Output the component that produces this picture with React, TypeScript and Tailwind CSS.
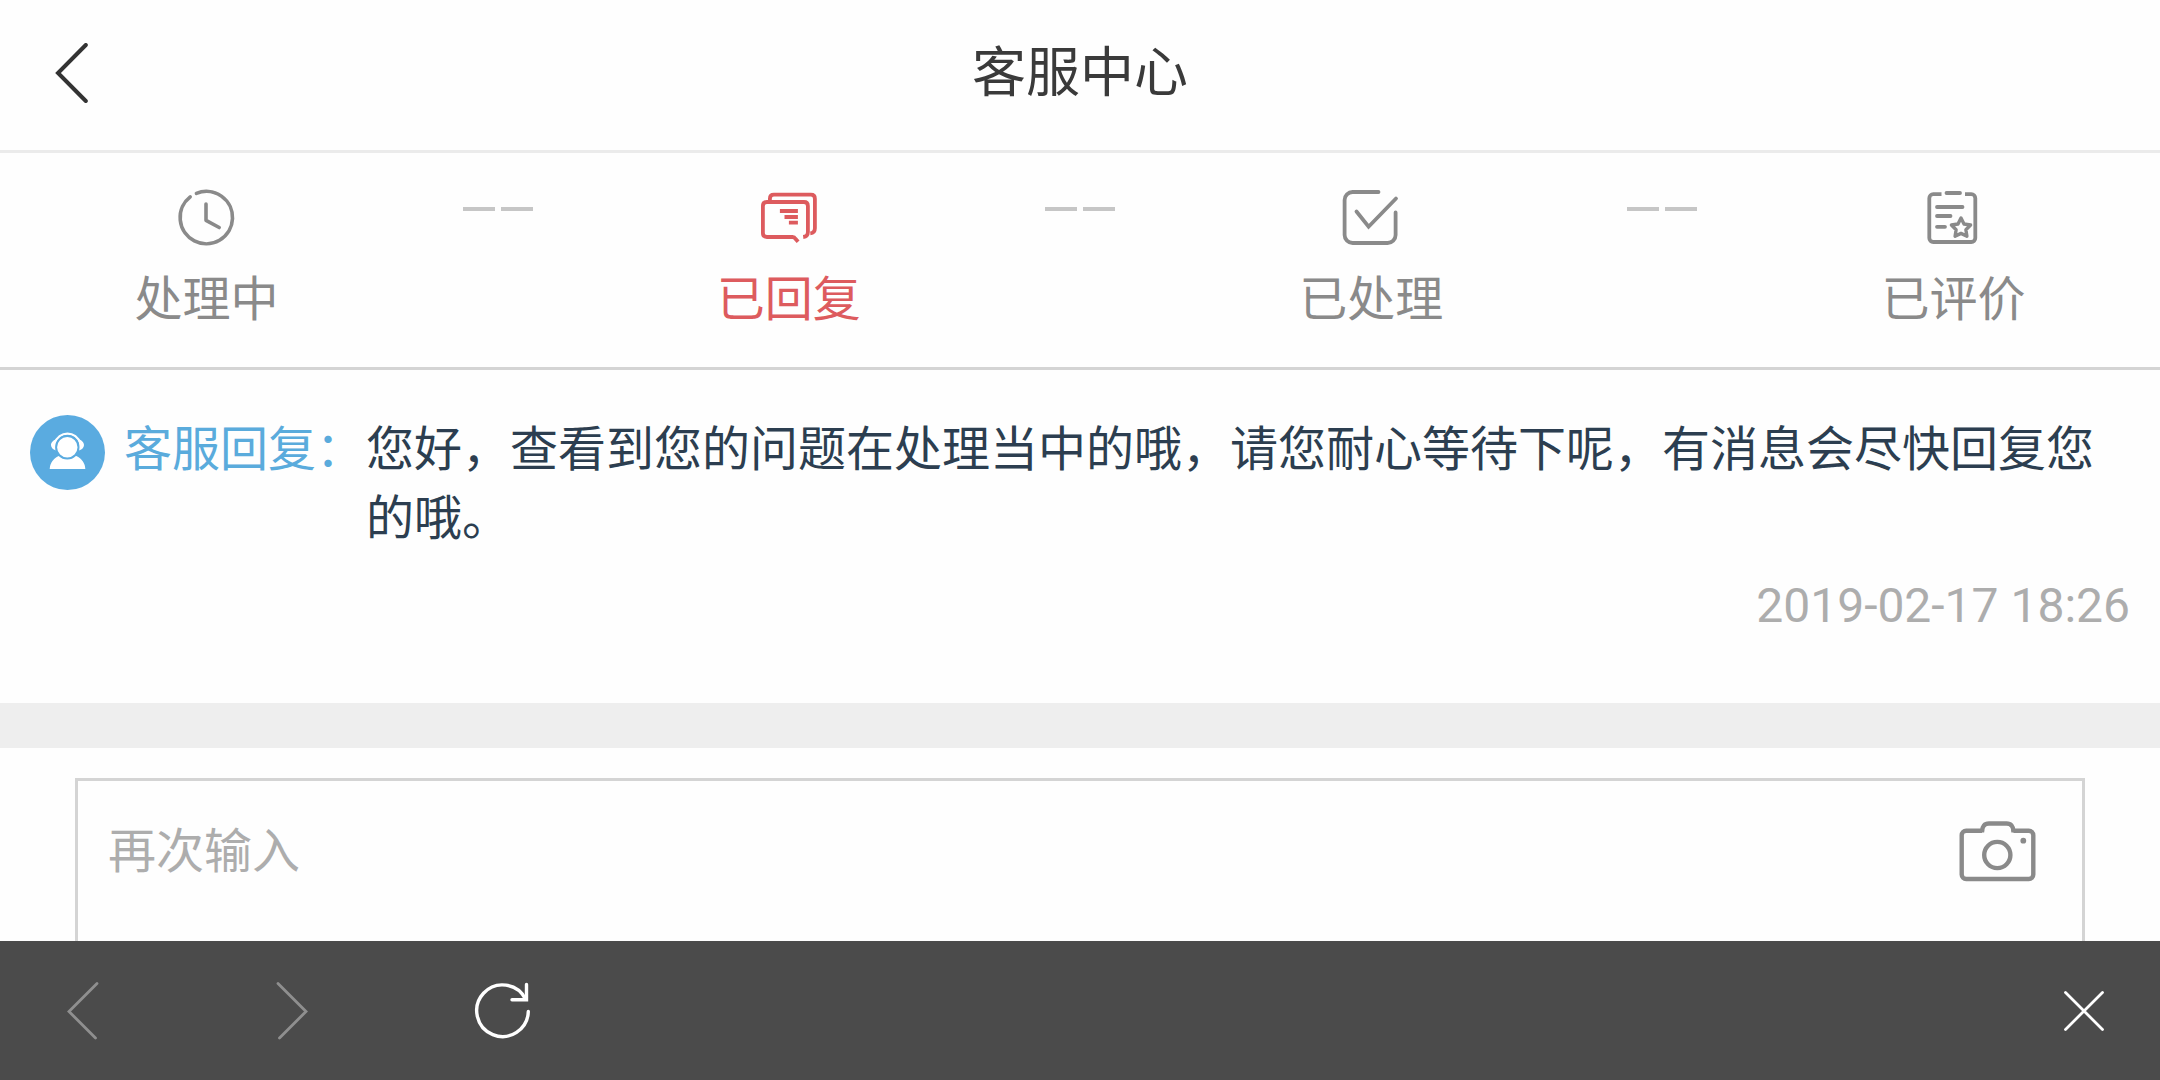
import React, { useState } from 'react';

interface IconProps {
  className?: string;
}

const ClockIcon: React.FC<IconProps> = ({ className = '' }) => (
  <svg viewBox="0 0 60 60" className={className} fill="none" stroke="currentColor" strokeWidth="3.6" strokeLinecap="round" strokeLinejoin="round" aria-hidden="true">
    <path d="M19.4 6.3A26.2 26.2 0 1 1 13.2 9.9" />
    <path d="M29 17v16.3l13.2 7.2" />
  </svg>
);

const ChatIcon: React.FC<IconProps> = ({ className = '' }) => (
  <svg viewBox="0 0 60 60" className={className} fill="none" stroke="currentColor" strokeWidth="3.8" aria-hidden="true">
    <path d="M44.2 50q4.700-.6 4.700-5V19q0-4-4-4h-37q-4 0-4 4v27q0 4 4 4h25.600q2 0 3 1.800l2.600 2.900" />
    <path d="M10.900 14v-2.300q0-4 4-4h37q4 0 4 4v29.500q0 4.700-4.600 5.100" />
    <path d="M20.900 24h18M25.500 30h13.400M29.900 35.700h9" />
  </svg>
);

const CheckIcon: React.FC<IconProps> = ({ className = '' }) => (
  <svg viewBox="0 0 60 60" className={className} fill="none" stroke="currentColor" strokeWidth="3.8" strokeLinecap="round" aria-hidden="true">
    <path d="M37.5 5H11.600a8 8 0 0 0-8 8v35a8 8 0 0 0 8 8h35a8 8 0 0 0 8-8V25.500" />
    <path d="M15.5 24.500l12.100 15.200L55 11.500" />
  </svg>
);

const ReviewIcon: React.FC<IconProps> = ({ className = '' }) => (
  <svg viewBox="0 0 60 60" className={className} fill="none" stroke="currentColor" strokeWidth="3.8" strokeLinejoin="round" aria-hidden="true">
    <path d="M18.500 7.200h-8.200a4 4 0 0 0-4 4V51a4 4 0 0 0 4 4h38a4 4 0 0 0 4-4V11.200a4 4 0 0 0-4-4H42" />
    <path d="M23.500 6h13.500M14 20h25.500M14 29h13.500M14 39.800h8" strokeLinecap="round" />
    <path d="M38 31l3 6 6.600 1-4.700 4.700 1 6.600-5.900-2.900-5.900 2.900 1-6.600-4.700-4.700 6.600-1z" strokeWidth="3.4" />
  </svg>
);

const AgentIcon: React.FC<IconProps> = ({ className = '' }) => (
  <svg viewBox="0 0 75 75" className={className} fill="none" aria-hidden="true">
    <circle cx="37.5" cy="37.5" r="37.5" fill="#5aabe0" />
    <path d="M25 28a13 13 0 0 1 25 0" stroke="#fff" strokeWidth="2.2" />
    <path d="M26 24.500c-3 .5-5 3.500-5 5.500s1.500 4.500 5 5.500zM49 24.500c3 .5 5 3.500 5 5.500s-1.500 4.500-5 5.500z" fill="#fff" />
    <path d="M19.700 54c.3-6 3.500-10.500 9-13h17.600c5.500 2.500 8.700 7 9 13z" fill="#fff" />
    <circle cx="37.300" cy="32.300" r="11.200" fill="#fff" stroke="#5aabe0" strokeWidth="2" />
  </svg>
);

const CameraIcon: React.FC<IconProps> = ({ className = '' }) => (
  <svg viewBox="0 0 80 66" className={className} fill="none" stroke="currentColor" strokeWidth="4.4" aria-hidden="true">
    <path d="M24 13.500V11.700H8.200a4.500 4.500 0 0 0-4.500 4.500v39.300a4.500 4.500 0 0 0 4.500 4.500h62.600a4.500 4.500 0 0 0 4.500-4.500V16.200a4.500 4.500 0 0 0-4.500-4.500H55.500v1.800" />
    <path d="M24 12.500c0-5 2.500-8 7-8h17.500c4.500 0 7 3 7 8" />
    <circle cx="39.3" cy="36" r="13.1" />
    <circle cx="65.3" cy="21.7" r="2.9" fill="currentColor" stroke="none" />
  </svg>
);

const BackIcon: React.FC<IconProps> = ({ className = '' }) => (
  <svg viewBox="0 0 60 60" className={className} fill="none" stroke="currentColor" strokeWidth="4" strokeLinecap="round" aria-hidden="true">
    <path d="M43.800 2L16 30l27.800 28" />
  </svg>
);

const ChevronLeftIcon: React.FC<IconProps> = ({ className = '' }) => (
  <svg viewBox="0 0 60 60" className={className} fill="none" stroke="currentColor" strokeWidth="2.8" strokeLinecap="round" aria-hidden="true">
    <path d="M45 2.500L17 30.500l26.500 26.500" />
  </svg>
);

const ChevronRightIcon: React.FC<IconProps> = ({ className = '' }) => (
  <svg viewBox="0 0 60 60" className={className} fill="none" stroke="currentColor" strokeWidth="2.8" strokeLinecap="round" aria-hidden="true">
    <path d="M16 2.500l28 28L17.500 57" />
  </svg>
);

const ReloadIcon: React.FC<IconProps> = ({ className = '' }) => (
  <svg viewBox="0 0 60 60" className={className} fill="none" stroke="currentColor" strokeWidth="3.4" strokeLinecap="round" aria-hidden="true">
    <path d="M56.300 30.500A25.800 25.800 0 1 1 53.500 18" />
    <path d="M54.500 3.500v15.200H40" />
  </svg>
);

const CloseIcon: React.FC<IconProps> = ({ className = '' }) => (
  <svg viewBox="0 0 60 60" className={className} fill="none" stroke="currentColor" strokeWidth="2.8" strokeLinecap="round" aria-hidden="true">
    <path d="M11.500 11.500l37 37M48.500 11.500l-37 37" />
  </svg>
);

const steps = [
  { label: '处理中', Icon: ClockIcon },
  { label: '已回复', Icon: ChatIcon },
  { label: '已处理', Icon: CheckIcon },
  { label: '已评价', Icon: ReviewIcon },
];

const StepBar: React.FC<{ current: number }> = ({ current }) => (
  <ol className="flex border-b-3 border-[#d4d4d4] px-[61px] pt-[34px] pb-[33px]">
    {steps.map(({ label, Icon }, index) => (
      <React.Fragment key={label}>
        {index > 0 && (
          <li className="flex flex-1 justify-center gap-1.5 pt-5" aria-hidden="true">
            <span className="h-1 w-8 bg-[#c6c6c6]" />
            <span className="h-1 w-8 bg-[#c6c6c6]" />
          </li>
        )}
        <li
          className={`flex flex-1 flex-col items-center gap-[18px] whitespace-nowrap ${
            index === current ? 'text-[#dd5b5e]' : 'text-[#8a8a8a]'
          }`}
          aria-current={index === current ? 'step' : undefined}
        >
          <Icon className="size-[60px]" />
          <span>{label}</span>
        </li>
      </React.Fragment>
    ))}
  </ol>
);

const Toolbar: React.FC = () => (
  <nav className="flex shrink-0 items-center gap-[150px] bg-[#4b4b4b] pt-10 pr-[46px] pb-[39px] pl-[52px] text-white">
    <button type="button" aria-label="后退" disabled className="text-[#8f8f8f]">
      <ChevronLeftIcon className="size-[60px]" />
    </button>
    <button type="button" aria-label="前进" disabled className="text-[#8f8f8f]">
      <ChevronRightIcon className="size-[60px]" />
    </button>
    <button type="button" aria-label="刷新">
      <ReloadIcon className="size-[60px]" />
    </button>
    <button type="button" aria-label="关闭" className="ml-auto">
      <CloseIcon className="size-[60px]" />
    </button>
  </nav>
);

export default function App(): React.JSX.Element {
  const [message, setMessage] = useState('');

  return (
    <div className="flex h-screen flex-col bg-[#fefefe] font-['Roboto','Noto_Sans_CJK_SC',sans-serif] text-[48px] leading-[69px]">
      <header className="grid h-[153px] shrink-0 grid-cols-[1fr_auto_1fr] items-center border-b-3 border-[#ebebeb] px-[42px] pb-1">
        <button type="button" aria-label="返回" className="justify-self-start text-[#333333]">
          <BackIcon className="size-[60px]" />
        </button>
        <h1 className="text-[54px] text-[#3a3a3a]">客服中心</h1>
      </header>

      <main className="min-h-0 flex-1 overflow-y-auto [scrollbar-width:none]">
        <StepBar current={1} />

        {/* Latest reply */}
        <section className="px-[30px] pt-[45px] pb-[63px]">
          <div className="flex items-start">
            <AgentIcon className="mr-[19px] size-[75px] shrink-0" />
            <span className="shrink-0 text-[#5aabdc]">客服回复：</span>
            <p className="ml-0.5 text-[#2c3e50]">
              您好，查看到您的问题在处理当中的哦，请您耐心等待下呢，有消息会尽快回复您的哦。
            </p>
          </div>
          <time dateTime="2019-02-17T18:26" className="mt-[18px] block text-right text-[#adadad]">
            2019-02-17 18:26
          </time>
        </section>

        {/* Follow-up input */}
        <section className="border-t-[45px] border-[#eeeeee] px-[75px] pt-[30px] pb-[75px]">
          <div className="flex items-start border-3 border-[#d4d4d4] py-9 pr-11 pl-[30px]">
            <textarea
              aria-label="再次输入"
              placeholder="再次输入"
              rows={4}
              value={message}
              onChange={(e) => setMessage(e.target.value)}
              className="flex-1 resize-none text-[#2c3e50] outline-none placeholder:text-[#adadad]"
            />
            <button type="button" aria-label="添加图片" className="pt-0.5 text-[#8a8a8a]">
              <CameraIcon className="h-[66px] w-20" />
            </button>
          </div>
        </section>
      </main>

      <Toolbar />
    </div>
  );
}
